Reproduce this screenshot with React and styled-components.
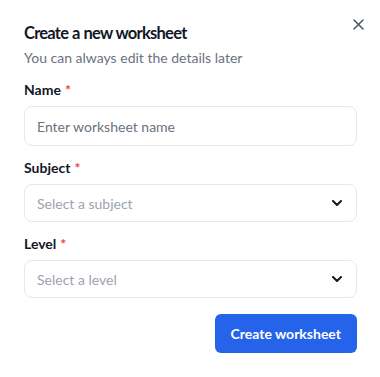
import React from 'react';
import styled, { createGlobalStyle } from 'styled-components';

const GlobalStyle = createGlobalStyle`
  html, body {
    margin: 0;
    padding: 0;
    background: #ffffff;
  }
  body {
    font-family: Lato, "Noto Sans", sans-serif;
    -webkit-font-smoothing: antialiased;
  }
`;

const Dialog = styled.div`
  position: relative;
  width: 380px;
  height: 377px;
  box-sizing: border-box;
  padding: 21px 23px 24px 24px;
  background: #ffffff;
  display: flex;
  flex-direction: column;
`;

const CloseButton = styled.button`
  position: absolute;
  top: 18px;
  right: 16px;
  width: 12px;
  height: 12px;
  padding: 0;
  border: none;
  background: transparent;
  color: #4b5563;
  display: flex;
  align-items: center;
  justify-content: center;
  cursor: pointer;
`;

const Title = styled.h2`
  margin: 0;
  font-size: 16.5px;
  line-height: 24px;
  font-weight: 700;
  letter-spacing: -0.75px;
  word-spacing: 0.5px;
  color: #111827;
`;

const Subtitle = styled.p`
  margin: 3px 0 0;
  font-size: 14px;
  line-height: 20px;
  color: #6b7280;
`;

const Form = styled.form`
  display: flex;
  flex-direction: column;
  gap: 12px;
  margin-top: 12px;
`;

const Field = styled.div`
  display: flex;
  flex-direction: column;
  gap: 6px;
`;

const Label = styled.label`
  font-size: 14px;
  line-height: 20px;
  font-weight: 700;
  color: #111827;
`;

const Required = styled.span`
  color: #ef4444;
  margin-left: 4px;
`;

const Input = styled.input`
  box-sizing: border-box;
  width: 100%;
  height: 40px;
  padding: 0 12px;
  border: 1px solid #e5e7eb;
  border-radius: 8px;
  font-family: inherit;
  font-size: 14px;
  color: #111827;
  background: #fff;
  outline: none;
  &::placeholder {
    color: #6b7280;
  }
`;

const Select = styled.div`
  box-sizing: border-box;
  width: 100%;
  height: 38px;
  padding: 0 14px 0 12px;
  border: 1px solid #e5e7eb;
  border-radius: 8px;
  display: flex;
  align-items: center;
  justify-content: space-between;
  font-size: 14px;
  color: #9ca3af;
  background: #fff;
`;

const Footer = styled.div`
  display: flex;
  justify-content: flex-end;
  margin-top: 4px;
`;

const PrimaryButton = styled.button`
  height: 39px;
  padding: 0 16px;
  border: none;
  border-radius: 6px;
  background: #2563eb;
  color: #ffffff;
  font-family: inherit;
  font-size: 14px;
  font-weight: 700;
  cursor: pointer;
`;

const Chevron = () => (
  <svg width="10" height="6" viewBox="0 0 10 6" fill="none" stroke="#111827" strokeWidth="2" strokeLinecap="round" strokeLinejoin="round">
    <path d="M1 1 5 5 9 1" />
  </svg>
);

const CloseIcon = () => (
  <svg width="11" height="11" viewBox="0 0 11 11" fill="none" stroke="currentColor" strokeWidth="1.5" strokeLinecap="round">
    <path d="M1 1 10 10" />
    <path d="M10 1 1 10" />
  </svg>
);

export default function App() {
  return (
    <>
      <GlobalStyle />
      <Dialog>
        <CloseButton aria-label="Close">
          <CloseIcon />
        </CloseButton>
        <Title>Create a new worksheet</Title>
        <Subtitle>You can always edit the details later</Subtitle>
        <Form onSubmit={e => e.preventDefault()}>
          <Field>
            <Label>Name<Required>*</Required></Label>
            <Input placeholder="Enter worksheet name" />
          </Field>
          <Field>
            <Label>Subject<Required>*</Required></Label>
            <Select>
              Select a subject
              <Chevron />
            </Select>
          </Field>
          <Field>
            <Label>Level<Required>*</Required></Label>
            <Select>
              Select a level
              <Chevron />
            </Select>
          </Field>
          <Footer>
            <PrimaryButton type="submit">Create worksheet</PrimaryButton>
          </Footer>
        </Form>
      </Dialog>
    </>
  );
}
